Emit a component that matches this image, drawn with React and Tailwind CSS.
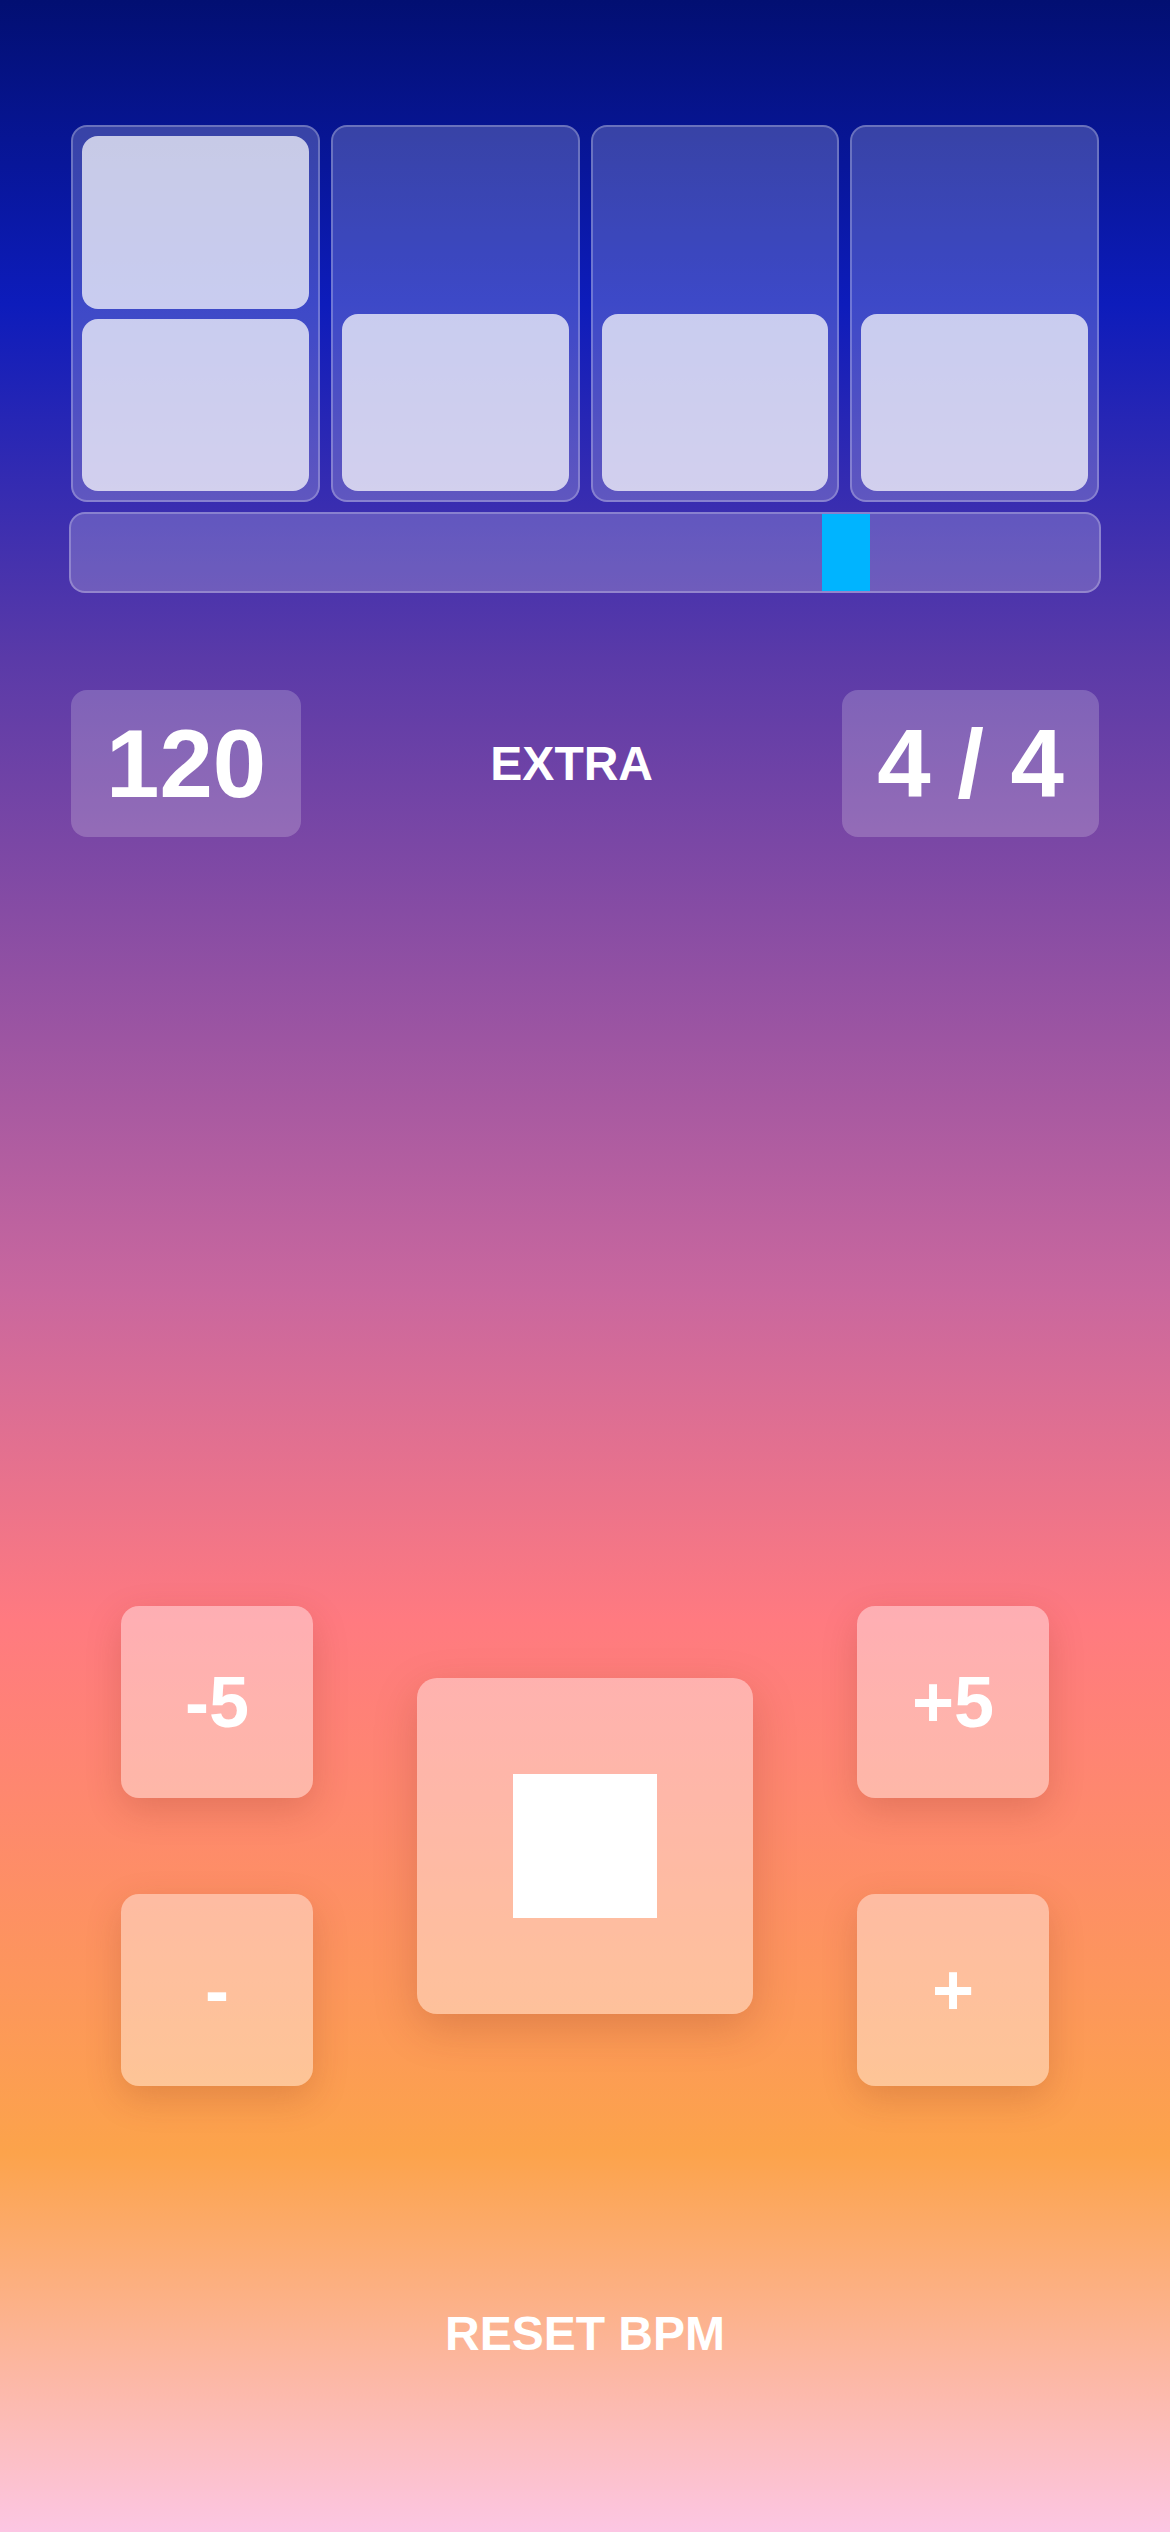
import React from "react";

const font = { fontFamily: '"Liberation Sans", Arial, Helvetica, sans-serif' };

function Cell({ count }) {
  return (
    <div className="h-[377px] rounded-[16px] border-2 border-white/25 bg-white/20 p-[9px] flex flex-col justify-end gap-[10px]">
      {count === 2 ? (
        <>
          <div className="flex-1 rounded-[16px] bg-white/[0.72]" />
          <div className="flex-1 rounded-[16px] bg-white/[0.72]" />
        </>
      ) : (
        <div className="h-[177px] rounded-[16px] bg-white/[0.72]" />
      )}
    </div>
  );
}

function SmallButton({ label }) {
  return (
    <div className="w-[192px] h-[192px] rounded-[18px] bg-white/40 shadow-[0_12px_36px_rgba(120,40,20,0.2)] flex items-center justify-center text-white font-bold text-[72px] leading-none">
      {label}
    </div>
  );
}

export default function App() {
  return (
    <div
      className="min-h-screen w-full bg-[linear-gradient(180deg,#020f72_0%,#0d1cbb_12%,#5a3aa8_26%,#c9679e_51%,#ff7a80_64%,#fca34b_85%,#fcc6e3_100%)] text-white"
      style={font}
    >
      <div className="px-[69px] pt-[125px]">
        <div className="px-[2px] grid grid-cols-4 gap-[11px]">
          <Cell count={2} />
          <Cell count={1} />
          <Cell count={1} />
          <Cell count={1} />
        </div>
        <div className="relative mt-[10px] h-[81px] rounded-[16px] border-2 border-white/25 bg-white/20 overflow-hidden">
          <div className="absolute top-0 bottom-0 left-[751px] w-[48px] bg-[#00b4ff]" />
        </div>
      </div>

      <div className="mt-[97px] px-[71px] flex items-center justify-between">
        <div className="h-[147px] px-[35px] rounded-[16px] bg-white/20 flex items-center font-bold text-[96px] leading-none">
          120
        </div>
        <div className="font-bold text-[48px] leading-none">EXTRA</div>
        <div className="h-[147px] px-[35px] rounded-[16px] bg-white/20 flex items-center font-bold text-[96px] leading-none whitespace-pre">
          4 / 4
        </div>
      </div>

      <div className="mt-[769px] flex items-center justify-center gap-[104px]">
        <div className="flex flex-col gap-[96px]">
          <SmallButton label="-5" />
          <SmallButton label="-" />
        </div>
        <div className="w-[336px] h-[336px] rounded-[20px] bg-white/40 shadow-[0_14px_44px_rgba(120,40,20,0.22)] flex items-center justify-center">
          <div className="w-[144px] h-[144px] bg-white" />
        </div>
        <div className="flex flex-col gap-[96px]">
          <SmallButton label="+5" />
          <SmallButton label="+" />
        </div>
      </div>

      <div className="mt-[224px] text-center font-bold text-[48px] leading-none">RESET BPM</div>
    </div>
  );
}
